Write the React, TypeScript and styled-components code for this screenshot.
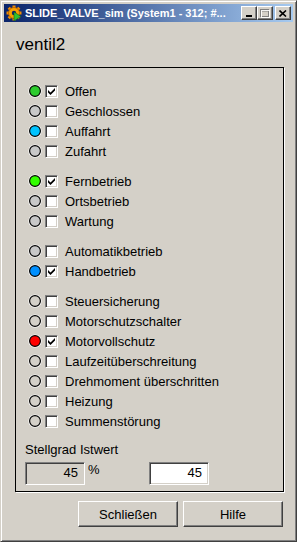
import styled, { createGlobalStyle } from "styled-components";

const GlobalStyle = createGlobalStyle`
	html, body { margin: 0; padding: 0; background: #d4d0c8; }
	body { font-family: "Liberation Sans", Arial, sans-serif; font-size: 13px; color: #000; }
`;

type Signal = { label: string; color: string; checked?: boolean };

const GRAY = "#c8c8c8";
const OFF = "#d4d0c8";

const groups: Signal[][] = [
	[
		{ label: "Offen", color: "#2ecc2e", checked: true },
		{ label: "Geschlossen", color: GRAY },
		{ label: "Auffahrt", color: "#00c4ff" },
		{ label: "Zufahrt", color: GRAY },
	],
	[
		{ label: "Fernbetrieb", color: "#33ff00", checked: true },
		{ label: "Ortsbetrieb", color: GRAY },
		{ label: "Wartung", color: GRAY },
	],
	[
		{ label: "Automatikbetrieb", color: GRAY },
		{ label: "Handbetrieb", color: "#0090ff", checked: true },
	],
	[
		{ label: "Steuersicherung", color: OFF },
		{ label: "Motorschutzschalter", color: OFF },
		{ label: "Motorvollschutz", color: "#ff0000", checked: true },
		{ label: "Laufzeitüberschreitung", color: OFF },
		{ label: "Drehmoment überschritten", color: OFF },
		{ label: "Heizung", color: OFF },
		{ label: "Summenstörung", color: OFF },
	],
];

function Led({ color }: { color: string }) {
	return (
		<svg width="14" height="14" viewBox="0 0 14 14">
			<circle cx="7" cy="7" r="6.6" fill="#fff" />
			<circle cx="7" cy="7" r="5.4" fill={color} stroke="#000" strokeWidth="1.2" />
		</svg>
	);
}

function AppIcon() {
	const teeth = [0, 45, 90, 135, 180, 225, 270, 315];
	return (
		<svg width="16" height="16" viewBox="0 0 16 16">
			{teeth.map((a) => (
				<rect key={a} x="6.5" y="0.5" width="3" height="4" fill="#f08c00" transform={`rotate(${a} 8 8)`} />
			))}
			<circle cx="8" cy="8" r="5.5" fill="#f5a000" stroke="#b05800" strokeWidth="0.8" />
			<circle cx="8" cy="8" r="2.2" fill="#0a246a" />
			<path d="M8 7 L15 11.5 L8 16 Z" fill="#30c030" stroke="#106010" strokeWidth="0.6" />
		</svg>
	);
}

export default function App() {
	return (
		<>
			<GlobalStyle />
			<Window>
				<TitleBar>
					<AppIcon />
					<Title>SLIDE_VALVE_sim (System1 - 312; #...</Title>
					<CaptionButton aria-label="Minimieren">
						<svg width="8" height="8" viewBox="0 0 8 8">
							<rect x="1" y="6" width="6" height="2" fill="#000" />
						</svg>
					</CaptionButton>
					<CaptionButton aria-label="Maximieren">
						<svg width="10" height="9" viewBox="0 0 10 9">
							<rect x="0.5" y="0.5" width="8" height="7" fill="none" stroke="#808080" />
							<rect x="0.5" y="1" width="8" height="1.5" fill="#808080" />
							<rect x="1.5" y="1.5" width="8" height="7" fill="none" stroke="#fff" opacity="0.9" />
						</svg>
					</CaptionButton>
					<CloseButton aria-label="Schließen">
						<svg width="8" height="7" viewBox="0 0 8 7">
							<path d="M0.5 0.5 L7 6.5 M7 0.5 L0.5 6.5" stroke="#000" strokeWidth="1.6" />
						</svg>
					</CloseButton>
				</TitleBar>
				<Client>
					<Heading>ventil2</Heading>
					<GroupBox>
						{groups.map((group, gi) => (
							<SignalGroup key={gi}>
								{group.map((s) => (
									<Row key={s.label}>
										<Led color={s.color} />
										<CheckBox>
											{s.checked && (
												<svg width="7" height="7" viewBox="0 0 7 7">
													<path d="M0 2 L0 4.5 L2.5 7 L7 2.5 L7 0 L2.5 4.5 Z" fill="#000" />
												</svg>
											)}
										</CheckBox>
										<Label>{s.label}</Label>
									</Row>
								))}
							</SignalGroup>
						))}
						<ValueSection>
							<ValueLabel>Stellgrad Istwert</ValueLabel>
							<ValueRow>
								<Field $readOnly>45</Field>
								<Unit>%</Unit>
								<Field>45</Field>
							</ValueRow>
						</ValueSection>
					</GroupBox>
					<ButtonBar>
						<Button>Schließen</Button>
						<Button>Hilfe</Button>
					</ButtonBar>
				</Client>
			</Window>
		</>
	);
}

const Window = styled.div`
	width: 297px;
	height: 542px;
	box-sizing: border-box;
	display: flex;
	flex-direction: column;
	padding: 3px;
	background: #d4d0c8;
	border: 1px solid;
	border-color: #d4d0c8 #404040 #404040 #d4d0c8;
	box-shadow: inset 1px 1px #fff, inset -1px -1px #808080;
`;
const TitleBar = styled.div`
	height: 18px;
	display: flex;
	align-items: center;
	padding: 0 2px 0 2px;
	background: linear-gradient(to right, #0a246a, #a6caf0);
	color: #fff;
`;
const Title = styled.div`
	flex: 1;
	margin-left: 3px;
	font-family: "Liberation Sans", Arial, sans-serif;
	font-weight: bold;
	font-size: 11px;
	white-space: nowrap;
	overflow: hidden;
`;
const CaptionButton = styled.div`
	width: 16px;
	height: 14px;
	box-sizing: border-box;
	display: flex;
	align-items: center;
	justify-content: center;
	background: #d4d0c8;
	border: 1px solid;
	border-color: #fff #404040 #404040 #fff;
	box-shadow: inset -1px -1px #808080;
`;
const CloseButton = styled(CaptionButton)`
	margin-left: 2px;
`;
const Client = styled.div`
	flex: 1;
	display: flex;
	flex-direction: column;
	padding: 0 9px 0 11px;
`;
const Heading = styled.div`
	font-size: 17px;
	line-height: 20px;
	margin: 13px 0 0 1px;
`;
const GroupBox = styled.div`
	margin-top: 12px;
	height: 425px;
	box-sizing: border-box;
	border: 1px solid #000;
	box-shadow: 1px 1px 0 #fff;
	padding: 13px 0 0 12px;
	display: flex;
	flex-direction: column;
	gap: 10px;
`;
const SignalGroup = styled.div`
	display: flex;
	flex-direction: column;
`;
const Row = styled.div`
	height: 20px;
	display: flex;
	align-items: center;
	svg {
		display: block;
	}
`;
const CheckBox = styled.div`
	width: 13px;
	height: 13px;
	margin-left: 3px;
	box-sizing: border-box;
	display: flex;
	align-items: center;
	justify-content: center;
	background: #fff;
	border: 1px solid;
	border-color: #808080 #fff #fff #808080;
	box-shadow: inset 1px 1px #404040, inset -1px -1px #d4d0c8;
`;
const Label = styled.span`
	margin-left: 7px;
	white-space: nowrap;
`;
const ValueSection = styled.div`
	margin-top: 1px;
	display: flex;
	flex-direction: column;
	gap: 5px;
	margin-left: -3px;
`;
const ValueLabel = styled.div`
	line-height: 15px;
`;
const ValueRow = styled.div`
	display: flex;
	align-items: flex-start;
`;
const Field = styled.div<{ $readOnly?: boolean }>`
	width: 60px;
	height: 23px;
	box-sizing: border-box;
	padding: 0 6px;
	line-height: 19px;
	text-align: right;
	background: ${(p) => (p.$readOnly ? "#d4d0c8" : "#fff")};
	border: 1px solid;
	border-color: #808080 #fff #fff #808080;
	box-shadow: inset 1px 1px #404040, inset -1px -1px #d4d0c8;
`;
const Unit = styled.span`
	width: 64px;
	box-sizing: border-box;
	padding-left: 3px;
	line-height: 15px;
`;
const ButtonBar = styled.div`
	margin-top: 9px;
	display: flex;
	justify-content: flex-end;
	gap: 5px;
	padding-right: 1px;
`;
const Button = styled.div`
	width: 100px;
	height: 26px;
	box-sizing: border-box;
	display: flex;
	align-items: center;
	justify-content: center;
	background: #d4d0c8;
	border: 1px solid;
	border-color: #fff #404040 #404040 #fff;
	box-shadow: inset -1px -1px #808080;
`;
